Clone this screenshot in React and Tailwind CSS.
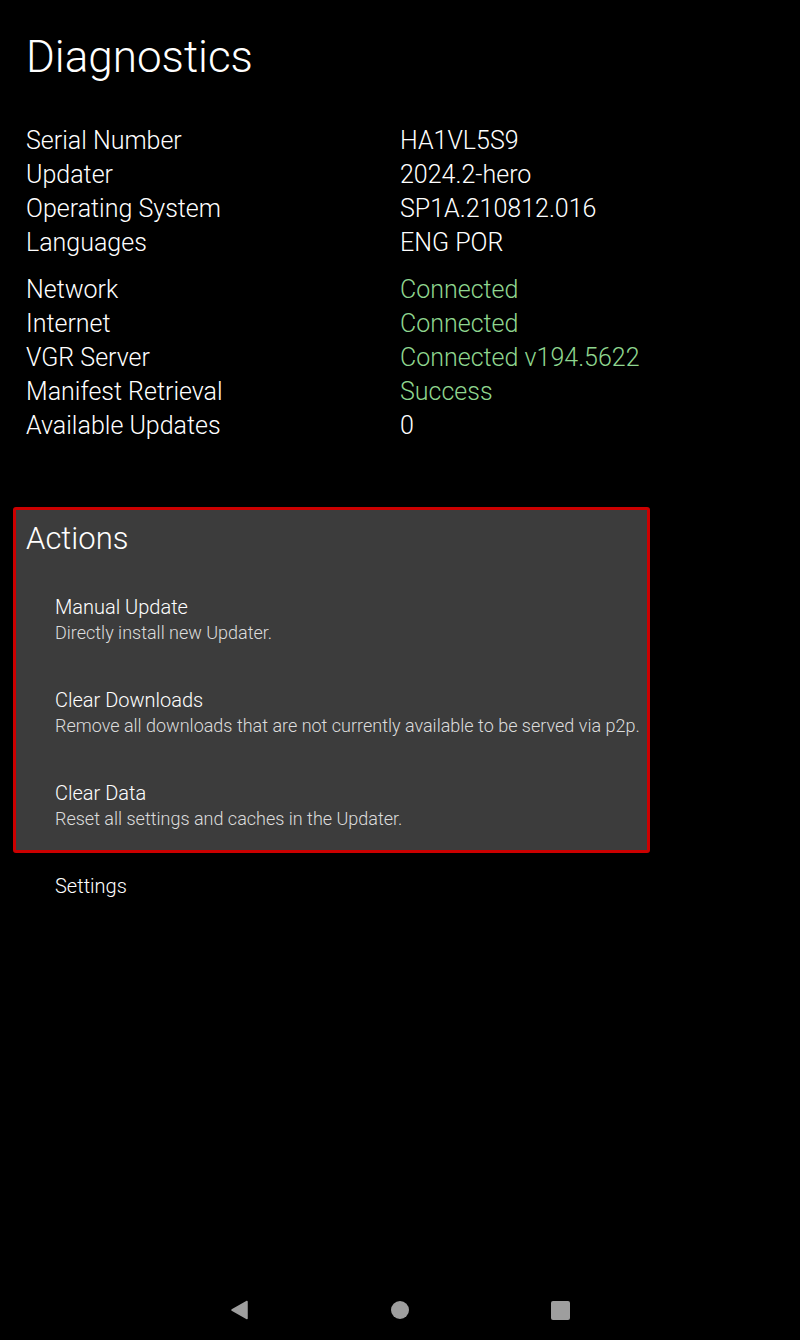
const infoRows = [
  { label: 'Serial Number', value: 'HA1VL5S9' },
  { label: 'Updater', value: '2024.2-hero' },
  { label: 'Operating System', value: 'SP1A.210812.016' },
  { label: 'Languages', value: 'ENG POR' },
];

const statusRows = [
  { label: 'Network', value: 'Connected', ok: true },
  { label: 'Internet', value: 'Connected', ok: true },
  { label: 'VGR Server', value: 'Connected v194.5622', ok: true },
  { label: 'Manifest Retrieval', value: 'Success', ok: true },
  { label: 'Available Updates', value: '0' },
];

const actions = [
  { title: 'Manual Update', desc: 'Directly install new Updater.' },
  { title: 'Clear Downloads', desc: 'Remove all downloads that are not currently available to be served via p2p.' },
  { title: 'Clear Data', desc: 'Reset all settings and caches in the Updater.' },
];

const Row = ({ label, value, ok }) => (
  <div className="flex h-[34px] items-center text-[25px] leading-[34px] font-light">
    <span className="w-[374px] text-white">{label}</span>
    <span className={ok ? 'text-[#8fd68f]' : 'text-white'}>{value}</span>
  </div>
);

const App = () => {
  return (
    <div
      className="min-h-screen w-[800px] bg-black flex flex-col"
      style={{ fontFamily: 'Roboto, "Noto Sans", sans-serif' }}
    >
      <div className="flex-1">
        <h1 className="pl-[26px] pt-[29px] text-[44px] leading-[56px] font-light text-white">
          Diagnostics
        </h1>

        <div className="pl-[26px] mt-[39px]">
          {infoRows.map(r => <Row key={r.label} {...r} />)}
        </div>
        <div className="pl-[26px] mt-[13px]">
          {statusRows.map(r => <Row key={r.label} {...r} />)}
        </div>

        <div className="ml-[13px] mt-[64px] w-[637px] border-[3px] border-[#cc0000] rounded-[3px] bg-[#3c3c3c] pl-[10px] pt-[9px] pb-[18px]">
          <h2 className="text-[31px] leading-[40px] font-light text-white">Actions</h2>
          <div className="mt-[35px] pl-[29px] flex flex-col gap-[41px]">
            {actions.map(a => (
              <div key={a.title}>
                <div className="text-[20px] leading-[26px] font-light text-white">{a.title}</div>
                <div className="text-[18px] leading-[26px] font-light text-[#dcdcdc]">{a.desc}</div>
              </div>
            ))}
          </div>
        </div>

        <div className="pl-[55px] mt-[20px] text-[20px] leading-[26px] font-light text-white">Settings</div>
      </div>

      <div className="h-[60px] flex items-center justify-center gap-[140px]">
        <div className="w-[20px] h-[20px] flex items-center justify-center">
          <svg width="20" height="20" viewBox="0 0 20 20">
            <path d="M17 1.5 L17 18.5 L2 10 Z" fill="#9e9e9e" stroke="#9e9e9e" strokeWidth="1.5" strokeLinejoin="round" />
          </svg>
        </div>
        <div className="w-[20px] h-[20px] flex items-center justify-center">
          <div className="w-[18px] h-[18px] rounded-full bg-[#9e9e9e]" />
        </div>
        <div className="w-[20px] h-[20px] flex items-center justify-center">
          <div className="w-[19px] h-[19px] rounded-[2px] bg-[#9e9e9e]" />
        </div>
      </div>
    </div>
  );
};

export default App;
